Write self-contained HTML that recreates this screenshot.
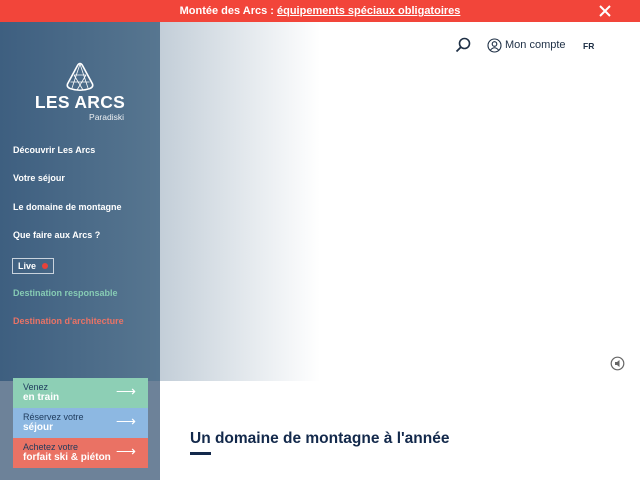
<!DOCTYPE html>
<html><head><meta charset="utf-8"><style>
*{margin:0;padding:0;box-sizing:border-box}
body{width:640px;height:480px;overflow:hidden;font-family:"Liberation Sans",sans-serif;background:#fff;position:relative}
.ban{position:absolute;left:0;top:0;width:640px;height:22px;background:#f2453a;color:#fff;font-size:11px;font-weight:bold;text-align:center;line-height:22px}
.x{position:absolute;right:28px;top:4px}
.side{position:absolute;left:0;top:22px;width:160px;height:359px;background:linear-gradient(90deg,#3e5f80,#577690)}
.sideb{position:absolute;left:0;top:381px;width:160px;height:99px;background:#6d8299}
.hero{position:absolute;left:160px;top:22px;width:160px;height:359px;background:linear-gradient(90deg,#c3ced8,#fff)}
.nav{position:absolute;left:13px;color:#fff;font-size:9px;font-weight:bold;white-space:nowrap}
.logo{position:absolute;left:0;top:62px;width:160px;text-align:center;color:#fff}
.btn{position:absolute;left:13px;width:135px;height:30px;padding:4px 10px;font-size:9px;line-height:10px;color:#1e3a5c}
.btn b{font-size:10px;color:#fff}
.btn span.a{position:absolute;right:12px;top:8px;color:#fff;font-size:14px}
</style></head><body>
<div class="ban">Montée des Arcs : <u>équipements spéciaux obligatoires</u></div>
<svg class="x" width="14" height="14" viewBox="0 0 14 14"><path d="M2 2L12 12M12 2L2 12" stroke="#fff" stroke-width="2"/></svg>
<div class="side"></div><div class="sideb"></div><div class="hero"></div>
<div class="logo">
<svg width="30" height="30" viewBox="0 0 30 30" style="display:block;margin:0 auto"><path d="M15 1.5Q16.5 1.5 17.5 3.5L27.5 22Q28.5 25 25 26.5Q15 30 5 26.5Q1.5 25 2.5 22L12.5 3.5Q13.5 1.5 15 1.5Z" fill="none" stroke="#fff" stroke-width="1.6"/><path d="M9 13H21M5.5 20H24.5M15 2L7 26M15 2L23 26M9 13L18 28M21 13L12 28" stroke="#fff" stroke-width="0.8" fill="none"/></svg>
<div style="font-size:17.5px;font-weight:bold;letter-spacing:0.3px;margin-top:1px;line-height:19px">LES ARCS</div>
<div style="font-size:8.5px;text-align:right;padding-right:36px;line-height:10px;opacity:.9">Paradiski</div>
</div>
<div class="nav" style="top:145px">Découvrir Les Arcs</div>
<div class="nav" style="top:173px">Votre séjour</div>
<div class="nav" style="top:202px">Le domaine de montagne</div>
<div class="nav" style="top:230px">Que faire aux Arcs ?</div>
<div class="nav" style="top:258px;left:12px;border:1px solid #c9d3dd;padding:2px 5px;height:16px;width:42px;line-height:10px">Live <span style="display:inline-block;width:6px;height:6px;border-radius:50%;background:#e8423a;margin-left:3px"></span></div>
<div class="nav" style="top:288px;color:#86cbb4">Destination responsable</div>
<div class="nav" style="top:316px;color:#e97366">Destination d'architecture</div>
<div class="btn" style="top:378px;background:#8dcfb5">Venez<br><b>en train</b><span class="a">⟶</span></div>
<div class="btn" style="top:408px;background:#8db8e2">Réservez votre<br><b>séjour</b><span class="a">⟶</span></div>
<div class="btn" style="top:438px;background:#ea7264">Achetez votre<br><b>forfait ski &amp; piéton</b><span class="a">⟶</span></div>
<svg style="position:absolute;left:455px;top:37px" width="16" height="16" viewBox="0 0 16 16"><circle cx="9.5" cy="6.5" r="5" fill="none" stroke="#1e2f45" stroke-width="1.6"/><path d="M6 10L1.5 14.5" stroke="#1e2f45" stroke-width="1.8"/></svg>
<svg style="position:absolute;left:487px;top:38px" width="15" height="15" viewBox="0 0 15 15"><circle cx="7.5" cy="7.5" r="6.5" fill="none" stroke="#1e2f45" stroke-width="1.1"/><circle cx="7.5" cy="6" r="2.3" fill="none" stroke="#1e2f45" stroke-width="1.1"/><path d="M3.5 12Q7.5 7.5 11.5 12" fill="none" stroke="#1e2f45" stroke-width="1.1"/></svg>
<div style="position:absolute;left:505px;top:39px;font-size:11px;color:#1e2f45">Mon compte</div>
<div style="position:absolute;left:583px;top:41px;font-size:8.5px;font-weight:bold;color:#1e2f45">FR</div>
<svg style="position:absolute;left:610px;top:356px" width="15" height="15" viewBox="0 0 15 15"><circle cx="7.5" cy="7.5" r="6.3" fill="none" stroke="#666" stroke-width="1.2"/><path d="M5 6H7L9.5 4V11L7 9H5Z" fill="#666"/></svg>
<div style="position:absolute;left:190px;top:430px;font-size:15.5px;font-weight:bold;color:#13294b;white-space:nowrap">Un domaine de montagne à l'année</div>
<div style="position:absolute;left:190px;top:452px;width:21px;height:3px;background:#13294b"></div>
</body></html>
